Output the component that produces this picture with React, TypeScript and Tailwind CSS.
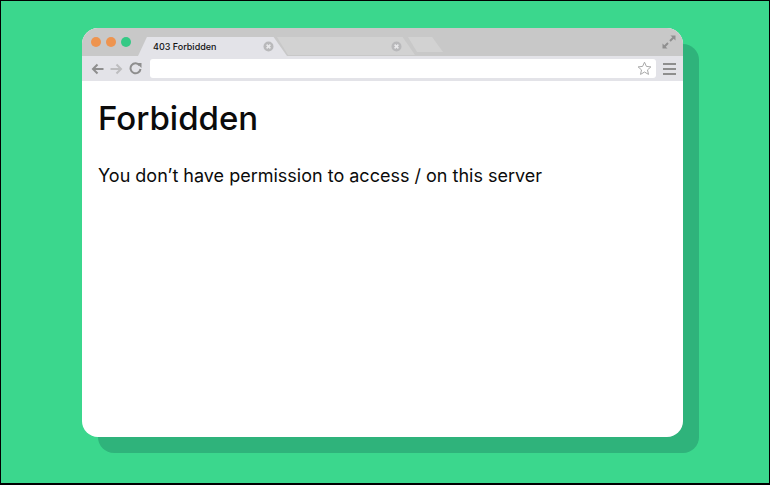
export default function App() {
  return <Page />;
}

function CloseDot() {
  return (
    <svg width="11" height="11" viewBox="0 0 11 11" className="shrink-0">
      <circle cx="5.5" cy="5.5" r="5" fill="#b9b9bb" />
      <path d="M3.6 3.6l3.8 3.8M7.4 3.6l-3.8 3.8" stroke="#e8e8ea" strokeWidth="1.6" />
    </svg>
  );
}

function Page() {
  return (
    <div className="w-[770px] h-[485px] bg-black pt-px pl-px pr-px pb-[2px] overflow-hidden font-['Inter',sans-serif]">
      <div className="h-full bg-[#3bd78d] pl-[81px] pt-[27px]">
        <div className="w-[601px] h-[409px] rounded-[16px] bg-white overflow-hidden shadow-[16px_16px_0_0_#2fb37b] flex flex-col relative">
          <div className="h-[28px] bg-[#c8c8c8] flex items-start shrink-0">
            <div className="flex gap-[5px] ml-[9px] mt-[9px] w-[47px] shrink-0">
              <span className="w-[10px] h-[10px] rounded-full bg-[#ee944f]" />
              <span className="w-[10px] h-[10px] rounded-full bg-[#ee944f]" />
              <span className="w-[10px] h-[10px] rounded-full bg-[#35c985]" />
            </div>
            <div className="flex items-start mt-[9px] shrink-0">
              <div className="w-[149px] h-[19px] bg-[#e3e3e8] [clip-path:polygon(6%_0,91%_0,100%_100%,0_100%)] flex items-center pl-[15px] pr-[13px] justify-between relative z-10">
                <span className="text-[9px] font-medium text-[#111] leading-none">403 Forbidden</span>
                <CloseDot />
              </div>
              <div className="w-[138px] h-[18px] -ml-[10px] bg-[#d2d2d2] [clip-path:polygon(0_0,91%_0,100%_100%,8%_100%)] flex items-center justify-end pr-[13px]">
                <CloseDot />
              </div>
              <div className="w-[35px] h-[15px] -ml-[7px] bg-[#d2d2d2] [clip-path:polygon(0_0,69%_0,100%_100%,26%_100%)]" />
            </div>
            <svg width="14" height="14" viewBox="0 0 14 14" className="ml-auto mr-[7px] mt-[7px]">
              <path d="M8.5 0.5H13.5V5.5L11.7 3.7L8.7 6.7L7.3 5.3L10.3 2.3Z M5.5 13.5H0.5V8.5L2.3 10.3L5.3 7.3L6.7 8.7L3.7 11.7Z" fill="#8f8f8f" />
            </svg>
          </div>
          <div className="h-[25px] bg-[#e3e3e8] flex items-center shrink-0 pl-[9px] pr-[7px]">
            <svg width="13" height="12" viewBox="0 0 13 12" className="shrink-0">
              <path d="M12.5 6H2M6.5 1.5L2 6l4.5 4.5" fill="none" stroke="#8e8e8e" strokeWidth="2" />
            </svg>
            <svg width="13" height="12" viewBox="0 0 13 12" className="shrink-0 ml-[6px]">
              <path d="M0.5 6H11M6.5 1.5L11 6l-4.5 4.5" fill="none" stroke="#bdbdbf" strokeWidth="2" />
            </svg>
            <svg width="13" height="13" viewBox="0 0 13 13" className="shrink-0 ml-[6px]">
              <path d="M10.6 3.4A5 5 0 1 0 11.5 7" fill="none" stroke="#8e8e8e" strokeWidth="2" />
              <path d="M7.5 1H12.5V6Z" fill="#8e8e8e" />
            </svg>
            <div className="ml-[8px] w-[506px] h-[19px] bg-white rounded-[3px] flex items-center justify-end pr-[4px] shrink-0">
              <svg width="15" height="15" viewBox="0 0 15 15">
                <path d="M7.5 1.2l1.9 4.2 4.5.5-3.4 3 1 4.5-4-2.4-4 2.4 1-4.5-3.4-3 4.5-.5z" fill="none" stroke="#a8a8a8" strokeWidth="1" />
              </svg>
            </div>
            <div className="ml-auto flex flex-col gap-[3px] w-[13px]">
              <span className="h-[2px] bg-[#8e8e8e]" />
              <span className="h-[2px] bg-[#8e8e8e]" />
              <span className="h-[2px] bg-[#8e8e8e]" />
            </div>
          </div>
          <div className="flex-1 pl-[16px] pt-[17px] text-[#0b0b0b]">
            <h1 className="text-[33px] leading-[40px] font-medium">Forbidden</h1>
            <p className="mt-[25px] text-[18px] leading-[26px]">You don’t have permission to access / on this server</p>
          </div>
        </div>
      </div>
    </div>
  );
}
